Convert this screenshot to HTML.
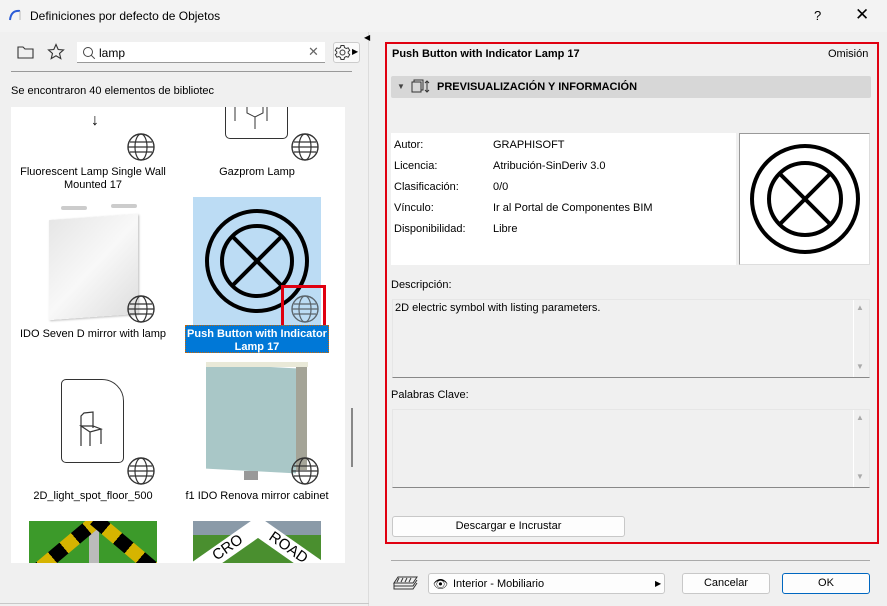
<!DOCTYPE html>
<html><head><meta charset="utf-8"><style>
*{box-sizing:border-box;margin:0;padding:0}
body{width:887px;height:606px;overflow:hidden;background:#f0f0f0;font-family:"Liberation Sans",sans-serif;font-size:11px;color:#000;position:relative}
.a{position:absolute}
.t{white-space:nowrap}
.lbl{position:absolute;text-align:center;width:170px;font-size:11px;line-height:13px}
.globe{position:absolute;width:30px;height:30px}
.btn{position:absolute;background:#fdfdfd;border:1px solid #c8c8c8;border-radius:3px;text-align:center;font-size:11px;line-height:19px}
</style></head><body>
<div class="a" style="left:0;top:0;width:887px;height:32px;background:#f3f3f3"></div>
<svg class="a" style="left:8px;top:8px" width="14" height="14"><path d="M2 12 Q3 2 12 3" stroke="#2a5bd7" stroke-width="2" fill="none"/><path d="M12 3 L12 12" stroke="#bbb" stroke-width="1"/></svg>
<div class="a t" style="left:30px;top:9px;font-size:12px">Definiciones por defecto de Objetos</div>
<div class="a t" style="left:814px;top:8px;font-size:13px">?</div>
<div class="a t" style="left:855px;top:5px;font-size:17px">✕</div>
<div class="a" style="left:368px;top:32px;width:1px;height:574px;background:#dcdcdc"></div>
<div class="a" style="left:0;top:603px;width:369px;height:1px;background:#c8c8c8"></div>
<!-- toolbar -->
<svg class="a" style="left:17px;top:44px" width="18" height="16"><path d="M1 3h5l2 2h8v9H1z" fill="none" stroke="#333" stroke-width="1.1"/></svg>
<svg class="a" style="left:47px;top:43px" width="18" height="18"><path d="M9 1.5l2.2 5 5.3.4-4 3.5 1.3 5.2L9 12.8 4.2 15.6l1.3-5.2-4-3.5 5.3-.4z" fill="none" stroke="#333" stroke-width="1.1"/></svg>
<div class="a" style="left:77px;top:42px;width:248px;height:21px;background:#fff;border-bottom:1px solid #999"></div>
<svg class="a" style="left:82px;top:46px" width="14" height="14"><circle cx="6" cy="6" r="4.5" fill="none" stroke="#444"/><path d="M9.3 9.3l3.5 3.5" stroke="#444"/></svg>
<div class="a t" style="left:99px;top:46px;font-size:12px">lamp</div>
<div class="a t" style="left:308px;top:44px;font-size:13px;color:#666">✕</div>
<div class="a" style="left:333px;top:42px;width:27px;height:21px;background:#fafafa;border:1px solid #ccc;border-radius:3px"></div>
<svg class="a" style="left:334px;top:44px" width="17" height="17"><circle cx="8.5" cy="8.5" r="2.5" fill="none" stroke="#333"/><path d="M7 1.5h3l.5 2 1.7 1 2-.7 1.5 2.6-1.5 1.4v1.4l1.5 1.4-1.5 2.6-2-.7-1.7 1-.5 2H7l-.5-2-1.7-1-2 .7-1.5-2.6 1.5-1.4V7.8L1.3 6.4l1.5-2.6 2 .7 1.7-1z" fill="none" stroke="#333"/></svg>
<div class="a t" style="left:352px;top:47px;font-size:8px">▶</div>
<div class="a" style="left:11px;top:71px;width:341px;height:1px;background:#999"></div>
<div class="a t" style="left:11px;top:85px">Se encontraron 40 elementos de bibliotec</div>
<div class="a" style="left:364px;top:33px;font-size:8px">◀</div>
<!-- list -->
<div class="a" style="left:11px;top:107px;width:334px;height:456px;background:#fff;overflow:hidden">
 <div class="a" style="left:80px;top:6px;font-size:16px;line-height:16px">↓</div>
 <div class="a" style="left:214px;top:-10px;width:63px;height:42px;border:1.3px solid #333;border-top:none;border-radius:0 0 5px 5px"></div>
 <svg class="a" style="left:214px;top:0" width="63" height="30"><path d="M10 0v14M22 0v6l8 4 8-4v-6M30 10v12M42 0v14" stroke="#333" fill="none"/></svg>
 <div class="lbl" style="left:-3px;top:59px">Fluorescent Lamp Single Wall<br>Mounted 17</div>
 <div class="lbl" style="left:161px;top:59px">Gazprom Lamp</div>
 <!-- row2 -->
 <div class="a" style="left:38px;top:110px;width:89px;height:100px;background:linear-gradient(135deg,#e6e6e6,#f8f8f8 50%,#dedede);transform:skewY(-4deg);box-shadow:1px 1px 2px #bbb"></div>
 <div class="a" style="left:50px;top:99px;width:26px;height:4px;background:#ccc;border-radius:2px"></div>
 <div class="a" style="left:100px;top:97px;width:26px;height:4px;background:#ccc;border-radius:2px"></div>
 <div class="a" style="left:182px;top:90px;width:128px;height:128px;background:#bcdcf4"></div>
 <svg class="a" style="left:182px;top:90px" width="128" height="128"><circle cx="64" cy="64" r="50" fill="none" stroke="#000" stroke-width="4"/><circle cx="64" cy="64" r="35" fill="none" stroke="#000" stroke-width="4"/><path d="M39 39L89 89M89 39L39 89" stroke="#000" stroke-width="4"/></svg>
 <div class="a" style="left:270px;top:178px;width:45px;height:43px;border:3px solid #e00010"></div>
 <div class="lbl" style="left:-3px;top:221px">IDO Seven D mirror with lamp</div>
 <div class="a" style="left:174px;top:218px;width:144px;height:28px;background:#0078d7;border:1px dotted #c60"></div>
 <div class="lbl" style="left:161px;top:221px;color:#fff;font-weight:bold">Push Button with Indicator<br>Lamp 17</div>
 <!-- row3 -->
 <div class="a" style="left:50px;top:272px;width:63px;height:84px;border:1.3px solid #333;border-radius:5px 22px 5px 5px;background:#fff"></div>
 <svg class="a" style="left:68px;top:303px" width="34" height="44"><path d="M2 36V6l3-3 9-1v16M2 16l9 6 11-3-8-3zM11 22v14M22 19v15" stroke="#333" fill="none" stroke-width="1.2"/></svg>
 <div class="a" style="left:195px;top:259px;width:90px;height:105px;background:#a9c7c7;transform:skewY(3deg)"></div>
 <div class="a" style="left:195px;top:255px;width:102px;height:5px;background:#e9e9d8"></div>
 <div class="a" style="left:285px;top:260px;width:11px;height:103px;background:#a4a497"></div>
 <div class="a" style="left:233px;top:364px;width:14px;height:9px;background:#999"></div>
 <div class="lbl" style="left:-3px;top:383px">2D_light_spot_floor_500</div>
 <div class="lbl" style="left:161px;top:383px">f1 IDO Renova mirror cabinet</div>
 <!-- row4 -->
 <div class="a" style="left:18px;top:414px;width:128px;height:42px;background:#3c9a2a;overflow:hidden">
  <div class="a" style="left:60px;top:0;width:10px;height:42px;background:#bbb"></div>
  <div class="a" style="left:-10px;top:20px;width:90px;height:14px;background:repeating-linear-gradient(90deg,#000 0 15px,#d6b400 15px 30px);transform:rotate(-40deg)"></div>
  <div class="a" style="left:55px;top:20px;width:90px;height:14px;background:repeating-linear-gradient(90deg,#000 0 15px,#d6b400 15px 30px);transform:rotate(40deg)"></div>
 </div>
 <div class="a" style="left:182px;top:414px;width:128px;height:42px;background:#4a8f2f;overflow:hidden">
  <div class="a" style="left:0;top:0;width:128px;height:14px;background:#8a9aa8"></div>
  <div class="a" style="left:-5px;top:18px;width:80px;height:18px;background:#fff;transform:rotate(-35deg);font-size:15px;line-height:18px;text-align:center">CRO</div>
  <div class="a" style="left:55px;top:18px;width:80px;height:18px;background:#fff;transform:rotate(35deg);font-size:15px;line-height:18px;text-align:center">ROAD</div>
 </div>
</div>
<div class="a" style="left:351px;top:408px;width:2px;height:59px;background:#888"></div>
<!-- globes -->
<svg width="0" height="0" style="position:absolute"><defs><g id="g"><circle cx="14" cy="14" r="13" fill="#fff" fill-opacity=".01" stroke="#333" stroke-width="1.4"/><ellipse cx="14" cy="14" rx="6" ry="13" fill="none" stroke="#333" stroke-width="1.2"/><path d="M1 14h26M3 9h22M3 19h22" stroke="#333" stroke-width="1.2"/></g></defs></svg>
<svg class="globe" style="left:127px;top:133px"><use href="#g"/></svg>
<svg class="globe" style="left:291px;top:133px"><use href="#g"/></svg>
<svg class="globe" style="left:127px;top:295px"><use href="#g"/></svg>
<svg class="globe" style="left:291px;top:295px;opacity:.7"><use href="#g"/></svg>
<svg class="globe" style="left:127px;top:457px"><use href="#g"/></svg>
<svg class="globe" style="left:291px;top:457px"><use href="#g"/></svg>
<!-- right -->
<div class="a" style="left:385px;top:42px;width:494px;height:502px;border:2px solid #e00010"></div>
<div class="a t" style="left:392px;top:48px;font-weight:bold">Push Button with Indicator Lamp 17</div>
<div class="a t" style="left:828px;top:48px">Omisión</div>
<div class="a" style="left:391px;top:76px;width:480px;height:22px;background:#d7d7d7;border-radius:2px"></div>
<div class="a t" style="left:397px;top:82px;font-size:8px;color:#444">▼</div>
<svg class="a" style="left:411px;top:79px" width="20" height="16"><rect x="3" y="1" width="9" height="10" fill="none" stroke="#333"/><rect x="1" y="3" width="9" height="10" fill="#d7d7d7" stroke="#333"/><path d="M16 2v11M14 4l2-2 2 2M14 11l2 2 2-2" stroke="#333" fill="none"/></svg>
<div class="a t" style="left:437px;top:81px;font-weight:bold">PREVISUALIZACIÓN Y INFORMACIÓN</div>
<div class="a" style="left:391px;top:133px;width:345px;height:132px;background:#fff"></div>
<div class="a" style="left:394px;top:135px;line-height:21px">Autor:<br>Licencia:<br>Clasificación:<br>Vínculo:<br>Disponibilidad:</div>
<div class="a t" style="left:493px;top:135px;line-height:21px">GRAPHISOFT<br>Atribución-SinDeriv 3.0<br>0/0<br>Ir al Portal de Componentes BIM<br>Libre</div>
<div class="a" style="left:739px;top:133px;width:131px;height:132px;background:#fff;border:1px solid #999;border-right-color:#ddd;border-bottom-color:#ddd"></div>
<svg class="a" style="left:740px;top:134px" width="130" height="130"><circle cx="65" cy="65" r="53" fill="none" stroke="#000" stroke-width="4"/><circle cx="65" cy="65" r="36" fill="none" stroke="#000" stroke-width="4"/><path d="M40 40L90 90M90 40L40 90" stroke="#000" stroke-width="4"/></svg>
<div class="a t" style="left:391px;top:279px">Descripción:</div>
<div class="a" style="left:392px;top:299px;width:478px;height:79px;border:1px solid #e6e6e6;border-bottom:1px solid #888;background:#f0f0f0"></div>
<div class="a t" style="left:395px;top:302px">2D electric symbol with listing parameters.</div>
<div class="a" style="left:853px;top:300px;width:1px;height:77px;background:#fff"></div>
<div class="a t" style="left:856px;top:303px;font-size:8px;color:#aaa">▲</div><div class="a t" style="left:856px;top:362px;font-size:8px;color:#aaa">▼</div>
<div class="a t" style="left:391px;top:389px">Palabras Clave:</div>
<div class="a" style="left:392px;top:409px;width:478px;height:79px;border:1px solid #e6e6e6;border-bottom:1px solid #888;background:#f0f0f0"></div>
<div class="a" style="left:853px;top:410px;width:1px;height:77px;background:#fff"></div>
<div class="a t" style="left:856px;top:413px;font-size:8px;color:#aaa">▲</div><div class="a t" style="left:856px;top:472px;font-size:8px;color:#aaa">▼</div>
<div class="btn" style="left:392px;top:516px;width:233px;height:21px">Descargar e Incrustar</div>
<div class="a" style="left:391px;top:560px;width:479px;height:1px;background:#aaa"></div>
<svg class="a" style="left:393px;top:574px" width="26" height="20"><path d="M5 3h19l-4 6H1zM1 9v3h19l4-6M1 12v3h19l4-6M6 4l-2 4M10 4l-2 4M14 4l-2 4M18 4l-2 4" stroke="#333" fill="none"/></svg>
<div class="btn" style="left:428px;top:573px;width:237px;height:21px"></div>
<div class="a t" style="left:433px;top:577px;font-size:12px">👁</div>
<div class="a t" style="left:453px;top:578px">Interior - Mobiliario</div>
<div class="a t" style="left:655px;top:579px;font-size:8px">▶</div>
<div class="btn" style="left:682px;top:573px;width:88px;height:21px">Cancelar</div>
<div class="btn" style="left:782px;top:573px;width:88px;height:21px;border-color:#0067c0">OK</div>
</body></html>
